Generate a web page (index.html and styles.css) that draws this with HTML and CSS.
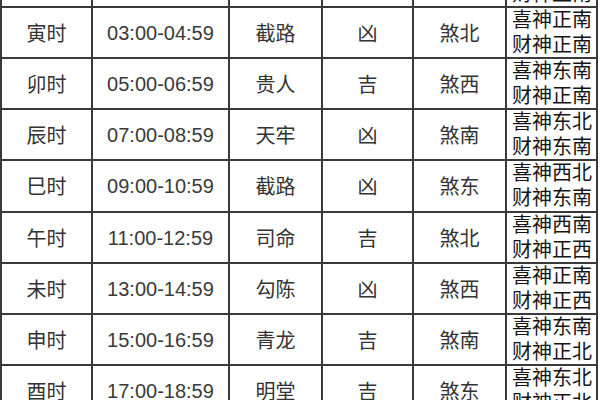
FILE: index.html
```html
<!DOCTYPE html>
<html lang="zh">
<head>
<meta charset="utf-8">
<title>时辰吉凶表</title>
<link rel="stylesheet" href="styles.css">
</head>
<body>
<div class="sheet">
  <div class="c">丑时</div><div class="c num">01:00-02:59</div><div class="c">白虎</div><div class="c">凶</div><div class="c">煞东</div><div class="g"><p>喜神东北财神正南</p></div>
  <div class="c">寅时</div><div class="c num">03:00-04:59</div><div class="c">截路</div><div class="c">凶</div><div class="c">煞北</div><div class="g"><p>喜神正南财神正南</p></div>
  <div class="c">卯时</div><div class="c num">05:00-06:59</div><div class="c">贵人</div><div class="c">吉</div><div class="c">煞西</div><div class="g"><p>喜神东南财神正南</p></div>
  <div class="c">辰时</div><div class="c num">07:00-08:59</div><div class="c">天牢</div><div class="c">凶</div><div class="c">煞南</div><div class="g"><p>喜神东北财神东南</p></div>
  <div class="c">巳时</div><div class="c num">09:00-10:59</div><div class="c">截路</div><div class="c">凶</div><div class="c">煞东</div><div class="g"><p>喜神西北财神东南</p></div>
  <div class="c">午时</div><div class="c num">11:00-12:59</div><div class="c">司命</div><div class="c">吉</div><div class="c">煞北</div><div class="g"><p>喜神西南财神正西</p></div>
  <div class="c">未时</div><div class="c num">13:00-14:59</div><div class="c">勾陈</div><div class="c">凶</div><div class="c">煞西</div><div class="g"><p>喜神正南财神正西</p></div>
  <div class="c">申时</div><div class="c num">15:00-16:59</div><div class="c">青龙</div><div class="c">吉</div><div class="c">煞南</div><div class="g"><p>喜神东南财神正北</p></div>
  <div class="c">酉时</div><div class="c num">17:00-18:59</div><div class="c">明堂</div><div class="c">吉</div><div class="c">煞东</div><div class="g"><p>喜神东北财神正北</p></div>
</div>
</body>
</html>
```
FILE: styles.css
```css
html, body {
  margin: 0;
  padding: 0;
  background: #ffffff;
  overflow: hidden;
  width: 600px;
  height: 400px;
}
.sheet {
  margin-top: -45px;
  width: 594px;
  padding: 2px;
  background: #3a3a3a;
  display: grid;
  grid-template-columns: 89px 135px 91px 89px 91px 89px;
  grid-template-rows: 49px 49px 49px 49px 50px 49px 49px 49px 49px;
  gap: 2px;
  font-family: "Noto Sans CJK SC", "Noto Sans", sans-serif;
  font-size: 20px;
}
.c {
  background: #ffffff;
  color: #333333;
  display: flex;
  align-items: center;
  justify-content: center;
  line-height: 1;
}
.num {
  font-family: "Liberation Sans", Arial, sans-serif;
  font-size: 20px;
  color: #3a3a3a;
}
.g {
  background: #ffffff;
  color: #151515;
  padding-left: 5px;
  line-height: 25px;
}
.g p {
  margin: -2px 0 0 0;
  width: 82px;
  word-break: break-all;
}
```
